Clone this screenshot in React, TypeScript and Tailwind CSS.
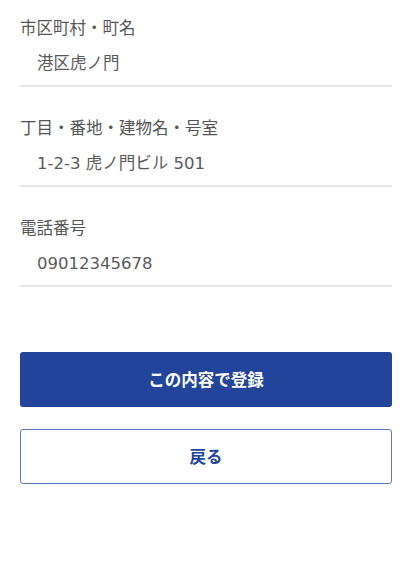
import React from 'react';

const fields = [
    { label: '市区町村・町名', value: '港区虎ノ門' },
    { label: '丁目・番地・建物名・号室', value: '1-2-3 虎ノ門ビル 501' },
    { label: '電話番号', value: '09012345678' },
];

const App: React.FC = () => {
    return (
        <div
            className="min-h-[562px] w-[413px] bg-white pl-5 pr-[21px] pt-[15px]"
            style={{ fontFamily: '"Noto Sans CJK JP", "Noto Sans", sans-serif' }}
        >
            {fields.map((f) => (
                <div key={f.label} className="mb-[28px]">
                    <div className="h-6 text-[16.5px] leading-6 text-[#555]">{f.label}</div>
                    <div
                        className="mt-[13px] border-b-2 border-[#e6e6e6] pb-[9px] pl-[17px] text-[16.5px] leading-6 text-[#5a5a5a]"
                        style={{ fontFamily: '"DejaVu Sans", "Noto Sans CJK JP", sans-serif' }}
                    >
                        {f.value}
                    </div>
                </div>
            ))}
            <div className="mt-[65px] flex flex-col gap-[22px]">
                <button className="h-[55px] w-full rounded-[3px] bg-[#22459b] text-[16.5px] font-bold text-white">
                    この内容で登録
                </button>
                <button className="h-[55px] w-full rounded-[3px] border border-[#5a77c0] bg-white text-[16.5px] font-bold text-[#22459b]">
                    戻る
                </button>
            </div>
        </div>
    );
};

export default App;
